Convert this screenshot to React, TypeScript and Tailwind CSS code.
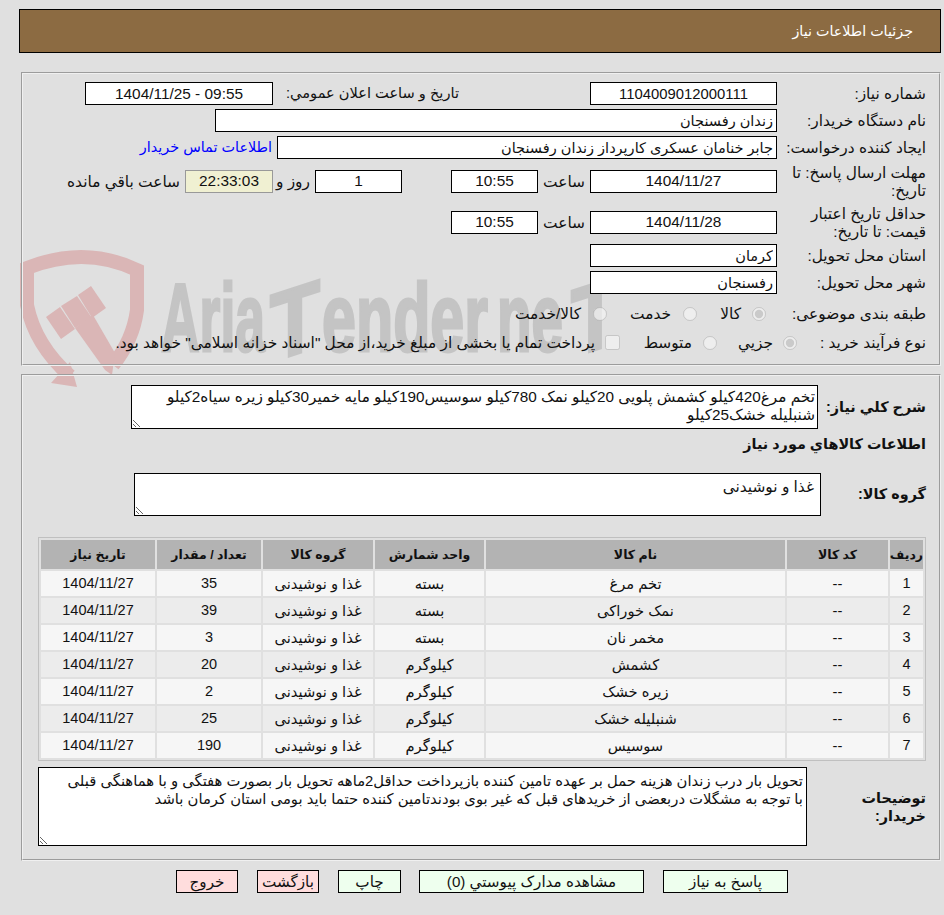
const rows = [
  ["1", "تخم مرغ", "بسته", "35"],
  ["2", "نمک خوراکی", "بسته", "39"],
  ["3", "مخمر نان", "بسته", "3"],
  ["4", "کشمش", "کیلوگرم", "20"],
  ["5", "زیره خشک", "کیلوگرم", "2"],
  ["6", "شنبلیله خشک", "کیلوگرم", "25"],
  ["7", "سوسیس", "کیلوگرم", "190"],
];

function Field({ value, className }: { value: string; className: string }) {
  return (
    <input
      readOnly
      value={value}
      className={`h-[23px] shrink-0 border border-black bg-white px-[3px] text-[#111] outline-none ${className}`}
    />
  );
}

function Label({ children }: { children: React.ReactNode }) {
  return <div className="w-[149px] shrink-0 pl-[4px] pt-[1px] leading-[18px] text-[#111]">{children}</div>;
}

function Radio({ name, checked }: { name: string; checked?: boolean }) {
  return <input type="radio" name={name} disabled checked={!!checked} readOnly className="m-0 h-[14px] w-[14px] shrink-0" />;
}

function Btn({ children, className }: { children: React.ReactNode; className: string }) {
  return <button className={`h-[23px] shrink-0 border border-black text-[15.2px] text-[#111] ${className}`}>{children}</button>;
}

export default function App() {
  return (
    <div
      dir="rtl"
      className="relative min-h-[915px] w-[944px] overflow-hidden bg-[#e0e0e0] pt-[9px] font-['Liberation_Sans','DejaVu_Sans',sans-serif] text-[15.4px] text-[#111]"
    >
      <svg className="absolute left-0 top-0 [direction:ltr]" width="944" height="400" aria-hidden="true">
        <path d="M70,376 Q35,345 27,305 L27,268 Q85,245 137,270 L137,310 Q133,340 113,365" fill="none" stroke="#dab6b6" strokeWidth="14" />
        <polygon points="70,362 77,387 51,383" fill="#dab6b6" />
        <polygon points="46,317 60,307 75,329 61,339" fill="#dab6b6" />
        <polygon points="61,306 77,296 92,318 75,328" fill="#dab6b6" />
        <polygon points="78,295 91,286 106,308 92,318" fill="#dab6b6" />
        <polygon points="75,328 93,315 115,353 112,375 105,370" fill="#dab6b6" />
        <g fill="#c4c4c4" stroke="#c4c4c4" strokeWidth="3" fontFamily="'Liberation Sans',sans-serif" fontWeight="700" fontSize="96">
          <text x="161" y="351" textLength="104" lengthAdjust="spacingAndGlyphs">Aria</text>
          <text x="270" y="351" textLength="50" lengthAdjust="spacingAndGlyphs" transform="translate(0,99) skewY(-18)">T</text>
          <text x="322" y="351" textLength="166" lengthAdjust="spacingAndGlyphs">ender</text>
          <text x="497" y="351" textLength="66" lengthAdjust="spacingAndGlyphs">ne</text>
          <text x="571" y="351" textLength="48" lengthAdjust="spacingAndGlyphs" transform="translate(0,192) skewY(-18)">T</text>
        </g>
      </svg>

      <div className="relative">
        <div className="ml-[19px] mr-[3px] flex h-[44px] items-center border border-black bg-[#8c6b42] pr-[27px] pt-[2px] text-[14.3px] text-white">
          جزئیات اطلاعات نیاز
        </div>

        <div className="ml-[21px] mr-[3px] mt-[19px] border-2 border-[#f0f0f0] pb-[10px] pr-[13px] pt-[8px] [border-style:groove]">
          <div className="flex h-[23px] items-center">
            <Label>شماره نیاز:</Label>
            <Field value="1104009012000111" className="w-[187px] text-center text-[14.85px]" />
            <div className="mr-[131px] w-[181px] shrink-0 whitespace-nowrap pt-[1px] text-[14.6px]">تاریخ و ساعت اعلان عمومي:</div>
            <Field value="1404/11/25 - 09:55" className="mr-[5px] w-[188px] text-center [direction:ltr]" />
          </div>
          <div className="mt-[4px] flex h-[23px] items-center">
            <Label>نام دستگاه خریدار:</Label>
            <Field value="زندان رفسنجان" className="w-[562px] text-[14.5px]" />
          </div>
          <div className="mt-[4px] flex h-[23px] items-center">
            <Label>ایجاد کننده درخواست:</Label>
            <Field value="جابر خنامان عسکری کارپرداز زندان رفسنجان" className="w-[500px] text-[14.5px]" />
            <a className="mr-[5px] pt-[1px] text-[14.4px] text-[#0000ff]" href="#">اطلاعات تماس خریدار</a>
          </div>
          <div className="mt-[5px] flex h-[34px] items-center">
            <Label>مهلت ارسال پاسخ: تا تاریخ:</Label>
            <Field value="1404/11/27" className="w-[187px] text-center" />
            <div className="w-[52px] shrink-0 pr-[5px] pt-[1px]">ساعت</div>
            <Field value="10:55" className="w-[87px] text-center" />
            <Field value="1" className="mr-[49px] w-[87px] text-center" />
            <div className="w-[42px] shrink-0 pr-[5px] pt-[1px]">روز و</div>
            <div className="flex h-[23px] w-[88px] shrink-0 items-center justify-center border border-[#999] bg-[#f0f0d2]">22:33:03</div>
            <div className="mr-[5px] shrink-0 pt-[1px]">ساعت باقي مانده</div>
          </div>
          <div className="mt-[7px] flex h-[34px] items-center">
            <Label>حداقل تاریخ اعتبار قیمت: تا تاریخ:</Label>
            <Field value="1404/11/28" className="w-[187px] text-center" />
            <div className="w-[52px] shrink-0 pr-[5px] pt-[1px]">ساعت</div>
            <Field value="10:55" className="w-[87px] text-center" />
          </div>
          <div className="mt-[5px] flex h-[23px] items-center">
            <Label>استان محل تحویل:</Label>
            <Field value="کرمان" className="w-[187px] text-[14.5px]" />
          </div>
          <div className="mt-[4px] flex h-[23px] items-center">
            <Label>شهر محل تحویل:</Label>
            <Field value="رفسنجان" className="w-[187px] text-[14.5px]" />
          </div>
          <div className="mt-[8px] flex h-[23px] items-center">
            <Label>طبقه بندی موضوعی:</Label>
            <div className="mr-[11px] flex w-[69px] shrink-0 items-center gap-[11px]">
              <Radio name="a" checked />
              <span>کالا</span>
            </div>
            <div className="flex w-[90px] shrink-0 items-center gap-[12px]">
              <Radio name="a" />
              <span>خدمت</span>
            </div>
            <div className="flex shrink-0 items-center gap-[12px]">
              <Radio name="a" />
              <span>کالا/خدمت</span>
            </div>
          </div>
          <div className="mt-[6px] flex h-[23px] items-center">
            <Label>نوع فرآیند خرید :</Label>
            <div className="mr-[-20px] flex w-[80px] shrink-0 items-center gap-[10px]">
              <Radio name="b" checked />
              <span>جزیي</span>
            </div>
            <div className="flex w-[97px] shrink-0 items-center gap-[11px]">
              <Radio name="b" />
              <span>متوسط</span>
            </div>
            <div className="flex shrink-0 items-center gap-[10px]">
              <input type="checkbox" disabled className="m-0 h-[15px] w-[15px] shrink-0" />
              <span className="whitespace-nowrap">پرداخت تمام یا بخشی از مبلغ خرید،از محل "اسناد خزانه اسلامی" خواهد بود.</span>
            </div>
          </div>
        </div>

        <div className="ml-[21px] mr-[3px] mt-[8px] border-2 border-[#f0f0f0] pb-[13px] pr-[13px] pt-[9px] [border-style:groove]">
          <div className="flex items-center">
            <div className="w-[108px] shrink-0 pt-[1px] text-[14.4px] font-bold">شرح کلي نیاز:</div>
            <textarea
              readOnly
              dir="rtl"
              className="block h-[44px] w-[687px] resize border border-black bg-white px-[2px] pb-0 pt-[2px] text-[15.3px] leading-[18px] text-[#111] outline-none"
              value="تخم مرغ420کیلو کشمش پلویی 20کیلو نمک 780کیلو سوسیس190کیلو مایه خمیر30کیلو زیره سیاه2کیلو شنبلیله خشک25کیلو"
            />
          </div>
          <div className="mt-[6px] text-[14.4px] font-bold leading-[18px]">اطلاعات کالاهاي مورد نیاز</div>
          <div className="mt-[20px] flex items-center">
            <div className="w-[105px] shrink-0 pt-[1px] text-[14.4px] font-bold">گروه کالا:</div>
            <textarea
              readOnly
              dir="rtl"
              className="block h-[43px] w-[687px] resize border border-black bg-white px-[6px] pb-0 pt-[4px] leading-[18px] text-[#111] outline-none"
              value="غذا و نوشیدنی"
            />
          </div>
          <table className="mt-[21px] w-[888px] table-fixed border-separate border-spacing-[2px] border border-[#c0c0c0] text-[14.7px]">
            <colgroup>
              <col className="w-[33px]" />
              <col className="w-[101px]" />
              <col className="w-[299px]" />
              <col className="w-[109px]" />
              <col className="w-[110px]" />
              <col className="w-[104px]" />
              <col />
            </colgroup>
            <thead>
              <tr className="h-[29px] bg-[#b3b3b3] text-[12.5px] font-bold">
                {["ردیف", "کد کالا", "نام کالا", "واحد شمارش", "گروه کالا", "تعداد / مقدار", "تاریخ نیاز"].map((h) => (
                  <th key={h} className="p-0 pt-[1px] font-bold">{h}</th>
                ))}
              </tr>
            </thead>
            <tbody>
              {rows.map((r, i) => (
                <tr key={r[0]} className={`h-[25px] text-center ${i % 2 === 0 ? "bg-[#f6f6f6]" : "bg-[#ececec]"}`}>
                  <td className="p-0 pt-[1px] text-[14.5px]">{r[0]}</td>
                  <td className="p-0 pt-[1px]">--</td>
                  <td className="p-0 pt-[1px]">{r[1]}</td>
                  <td className="p-0 pt-[1px]">{r[2]}</td>
                  <td className="p-0 pt-[1px]">غذا و نوشیدنی</td>
                  <td className="p-0 pt-[1px] text-[14.5px]">{r[3]}</td>
                  <td className="p-0 pt-[1px] text-[14.5px]">1404/11/27</td>
                </tr>
              ))}
            </tbody>
          </table>
          <div className="mt-[6px] flex items-center">
            <div className="w-[119px] shrink-0 pl-[20px] pt-[1px] text-[14.4px] font-bold leading-[18px]">توضیحات خریدار:</div>
            <textarea
              readOnly
              dir="rtl"
              className="block h-[79px] w-[769px] resize border border-black bg-white px-[3px] pb-0 pt-[4px] text-[14.8px] leading-[18px] text-[#111] outline-none"
              value={"تحویل بار درب زندان هزینه حمل بر عهده تامین کننده بازپرداخت حداقل2ماهه تحویل بار بصورت هفتگی و با هماهنگی قبلی\nبا توجه به مشگلات دربعضی از خریدهای قبل که غیر بوی بودندتامین کننده حتما باید بومی استان کرمان باشد"}
            />
          </div>
        </div>

        <div className="mr-[156px] mt-[9px] flex">
          <Btn className="w-[125px] bg-[#eeffee]">پاسخ به نیاز</Btn>
          <Btn className="mr-[19px] w-[225px] bg-[#eeffee]">مشاهده مدارک پیوستي (0)</Btn>
          <Btn className="mr-[18px] w-[63px] bg-[#eeffee]">چاپ</Btn>
          <Btn className="mr-[19px] w-[62px] bg-[#ffdddd]">بازگشت</Btn>
          <Btn className="mr-[19px] w-[62px] bg-[#ffdddd]">خروج</Btn>
        </div>
      </div>
    </div>
  );
}
